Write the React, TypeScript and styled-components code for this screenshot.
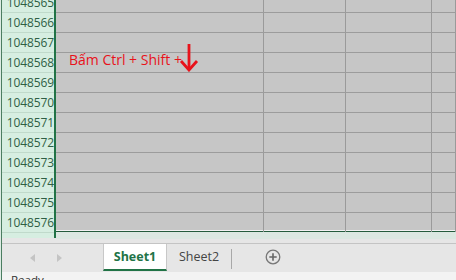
import styled, { createGlobalStyle } from "styled-components";

const GlobalStyle = createGlobalStyle`
  html, body {
    margin: 0;
    padding: 0;
    overflow: hidden;
    background: #e6e6e6;
  }
  * {
    box-sizing: border-box;
  }
`;

const Page = styled.div`
  width: 456px;
  height: 280px;
  display: flex;
  flex-direction: column;
  padding-left: 1px;
  background: #dcebe3;
  font-family: "Open Sans", "Noto Sans", sans-serif;
  overflow: hidden;
`;

const Frame = styled.div`
  flex: 1 1 auto;
  display: flex;
  flex-direction: column;
  border-left: 1px solid #4b7d61;
  background: #e6e6e6;
  min-height: 0;
`;

const Main = styled.div`
  height: 243px;
  display: flex;
  flex: 0 0 auto;
`;

const LeftColumn = styled.div`
  width: 54px;
  display: flex;
  flex-direction: column;
`;

const HeaderCol = styled.div`
  height: 238px;
  overflow: hidden;
  background: #d6eee1;
  border-right: 2px solid #217346;
`;

const HeaderCell = styled.div<{ $first?: boolean }>`
  height: 20px;
  margin-top: ${(p) => (p.$first ? "-7px" : "0")};
  border-bottom: 1px solid #c0dacb;
  padding-right: 0;
  padding-top: 1px;
  text-align: right;
  font-size: 12px;
  line-height: 18px;
  color: #2f5f44;
  letter-spacing: -0.1px;
`;

const RightColumn = styled.div`
  flex: 1 1 auto;
  display: flex;
  flex-direction: column;
`;

const GridBody = styled.div`
  position: relative;
  height: 232px;
  overflow: hidden;
  background: #c6c6c6;
  box-shadow: inset 0 -1px 0 #245c3c, inset 0 -2px 0 #f2f2f2;
`;

const GridRow = styled.div<{ $first?: boolean }>`
  height: 20px;
  margin-top: ${(p) => (p.$first ? "-7px" : "0")};
  display: grid;
  grid-template-columns: 208px 82px 86px 1fr;
  border-bottom: 1px solid #9c9c9c;
`;

const Cell = styled.div`
  border-right: 1px solid #9a9a9a;
`;

const Callout = styled.div`
  position: absolute;
  left: 13px;
  top: 43px;
  display: flex;
  align-items: flex-start;
  color: #e8121b;
  font-size: 14px;
  white-space: nowrap;
`;

const CalloutText = styled.span`
  margin-top: 7px;
  line-height: 20px;
`;

const ScrollStrip = styled.div`
  flex: 1 1 auto;
  background: linear-gradient(#dbe8e1 0 7px, #e6e6e6 7px);
`;

const TabBar = styled.div`
  height: 29px;
  flex: 0 0 auto;
  display: flex;
  align-items: stretch;
  border-top: 1px solid #c4c4c4;
  background: #e6e6e6;
`;

const Nav = styled.div`
  width: 101px;
  display: flex;
  align-items: center;
  padding-left: 27px;
  gap: 20px;
`;

const NavArrow = styled.div<{ $dir: "left" | "right" }>`
  width: 0;
  height: 0;
  border-top: 4px solid transparent;
  border-bottom: 4px solid transparent;
  ${(p) =>
    p.$dir === "left"
      ? "border-right: 5px solid #c4c4c4;"
      : "border-left: 5px solid #c4c4c4;"}
  margin: 0 1px;
`;

const Tab = styled.div<{ $active?: boolean }>`
  width: 64px;
  height: 27px;
  display: flex;
  align-items: center;
  justify-content: center;
  font-size: 12.5px;
  padding-bottom: 1px;
  font-weight: ${(p) => (p.$active ? 700 : 400)};
  color: ${(p) => (p.$active ? "#217346" : "#444")};
  background: ${(p) => (p.$active ? "#fff" : "transparent")};
  border-left: ${(p) => (p.$active ? "1px solid #c8c8c8" : "none")};
  border-right: ${(p) => (p.$active ? "1px solid #c8c8c8" : "none")};
  border-bottom: ${(p) => (p.$active ? "2px solid #217346" : "2px solid transparent")};
`;

const Divider = styled.div`
  width: 1px;
  margin: 5px 0 3px;
  background: #a8a8a8;
`;

const AddSheet = styled.div`
  display: flex;
  align-items: center;
  padding-left: 33px;
  padding-bottom: 2px;
`;

const StatusBar = styled.div`
  flex: 1 1 auto;
  background: #f3f3f3;
  padding: 0 0 0 9px;
  font-size: 11.5px;
  line-height: 16px;
  color: #333;
  overflow: hidden;
`;

const rows = Array.from({ length: 12 }, (_, i) => 1048565 + i);

const DownArrow = () => (
  <svg width="20" height="29" viewBox="0 0 20 29" style={{ marginLeft: -3 }}>
    <path d="M10 1 V26" stroke="#e8121b" strokeWidth="2.8" fill="none" />
    <path
      d="M2 18 L10 27 L18 18"
      stroke="#e8121b"
      strokeWidth="2.8"
      fill="none"
      strokeLinejoin="miter"
    />
  </svg>
);

const PlusIcon = () => (
  <svg width="16" height="16" viewBox="0 0 16 16">
    <circle cx="8" cy="8" r="6.8" stroke="#777" strokeWidth="1.3" fill="none" />
    <path d="M8 4.3 V11.7 M4.3 8 H11.7" stroke="#666" strokeWidth="1.6" />
  </svg>
);

export default function App() {
  return (
    <>
      <GlobalStyle />
      <Page>
        <Frame>
          <Main>
            <LeftColumn>
              <HeaderCol>
                {rows.map((n, i) => (
                  <HeaderCell key={n} $first={i === 0}>
                    {n}
                  </HeaderCell>
                ))}
              </HeaderCol>
            </LeftColumn>
            <RightColumn>
              <GridBody>
                {rows.map((n, i) => (
                  <GridRow key={n} $first={i === 0}>
                    <Cell />
                    <Cell />
                    <Cell />
                    <Cell />
                  </GridRow>
                ))}
                <Callout>
                  <CalloutText>Bấm Ctrl + Shift +</CalloutText>
                  <DownArrow />
                </Callout>
              </GridBody>
              <ScrollStrip />
            </RightColumn>
          </Main>
          <TabBar>
            <Nav>
              <NavArrow $dir="left" />
              <NavArrow $dir="right" />
            </Nav>
            <Tab $active>Sheet1</Tab>
            <Tab>Sheet2</Tab>
            <Divider />
            <AddSheet>
              <PlusIcon />
            </AddSheet>
          </TabBar>
          <StatusBar>Ready</StatusBar>
        </Frame>
      </Page>
    </>
  );
}
